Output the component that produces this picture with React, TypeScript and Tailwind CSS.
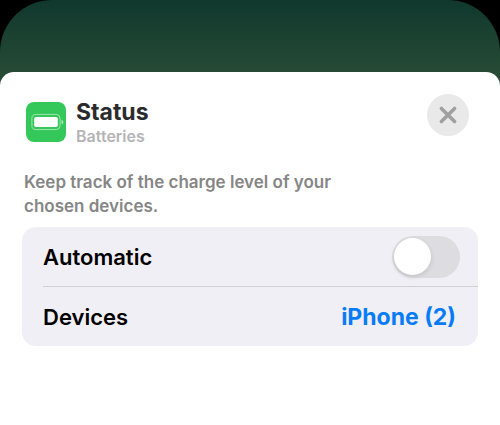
import { useState } from "react";

function BatteryIcon() {
  return (
    <svg viewBox="0 0 40 40" className="size-10 shrink-0" aria-hidden="true">
      <rect width="40" height="40" rx="8" fill="#34c759" />
      <rect x="5.900" y="12.400" width="28.200" height="15.200" rx="4" fill="none" stroke="#a3e5b3" strokeWidth="1" />
      <rect x="8.200" y="15" width="23.600" height="10" rx="1.800" fill="#fff" />
      <path d="M35.6 18v4.400c1.100-.4 1.700-1.200 1.700-2.200s-.6-1.800-1.700-2.200z" fill="#b5eac2" />
    </svg>
  );
}

export default function App() {
  const [automatic, setAutomatic] = useState(false);

  return (
    <div className="min-h-screen bg-black font-['Inter','Liberation_Sans',sans-serif]">
      <div className="flex min-h-screen flex-col rounded-t-[52px] bg-[linear-gradient(to_bottom,#10382d_0px,#264a35_72px)] pt-18">
        <main className="grow rounded-t-[14px] bg-white px-[22px] pt-[22px]">
          <header className="flex items-start justify-between pr-[9px] pl-1">
            <div className="flex items-center gap-[10px] pt-1">
              <BatteryIcon />
              <div>
                <h1 className="text-[23px] leading-7 font-bold text-[#2b2b2d]">Status</h1>
                <p className="text-[16px] leading-5 font-semibold text-[#b4b4b6]">Batteries</p>
              </div>
            </div>
            <button
              type="button"
              aria-label="Close"
              className="flex size-[42px] items-center justify-center rounded-full bg-[#e9e9e9]"
            >
              <svg viewBox="0 0 20 20" className="size-5" fill="none" stroke="#a0a0a0" strokeWidth="3.600" strokeLinecap="round">
                <path d="M3.400 3.400l13.200 13.200M16.600 3.400L3.400 16.600" />
              </svg>
            </button>
          </header>

          <p className="mt-6 max-w-[340px] pl-[2px] text-[17px] leading-6 font-semibold text-[#868686]">
            Keep track of the charge level of your chosen devices.
          </p>

          <section className="mt-[9px] rounded-[14px] bg-[#f0eff5] pl-[21px] text-[22px] leading-7 font-semibold text-black">
            <div className="flex h-[60px] items-center justify-between border-b border-[#d0cfd4] pr-[18px]">
              <label htmlFor="automatic">Automatic</label>
              <span className="relative flex h-[42px] w-[68px] items-center rounded-full bg-[#dddce1] p-[2px]">
                <input
                  id="automatic"
                  type="checkbox"
                  role="switch"
                  checked={automatic}
                  onChange={(e) => setAutomatic(e.target.checked)}
                  className="peer absolute inset-0 cursor-pointer appearance-none rounded-full checked:bg-[#34c759]"
                />
                <span className="pointer-events-none relative size-[37px] rounded-full bg-white shadow-[0_2px_5px_rgba(0,0,0,0.12)] transition-transform peer-checked:translate-x-[27px]" />
              </span>
            </div>
            <div className="flex h-[59px] items-center justify-between pr-[22px]">
              <span>Devices</span>
              <button type="button" className="text-[23px] font-bold text-[#087cf7]">
                iPhone (2)
              </button>
            </div>
          </section>
        </main>
      </div>
    </div>
  );
}
